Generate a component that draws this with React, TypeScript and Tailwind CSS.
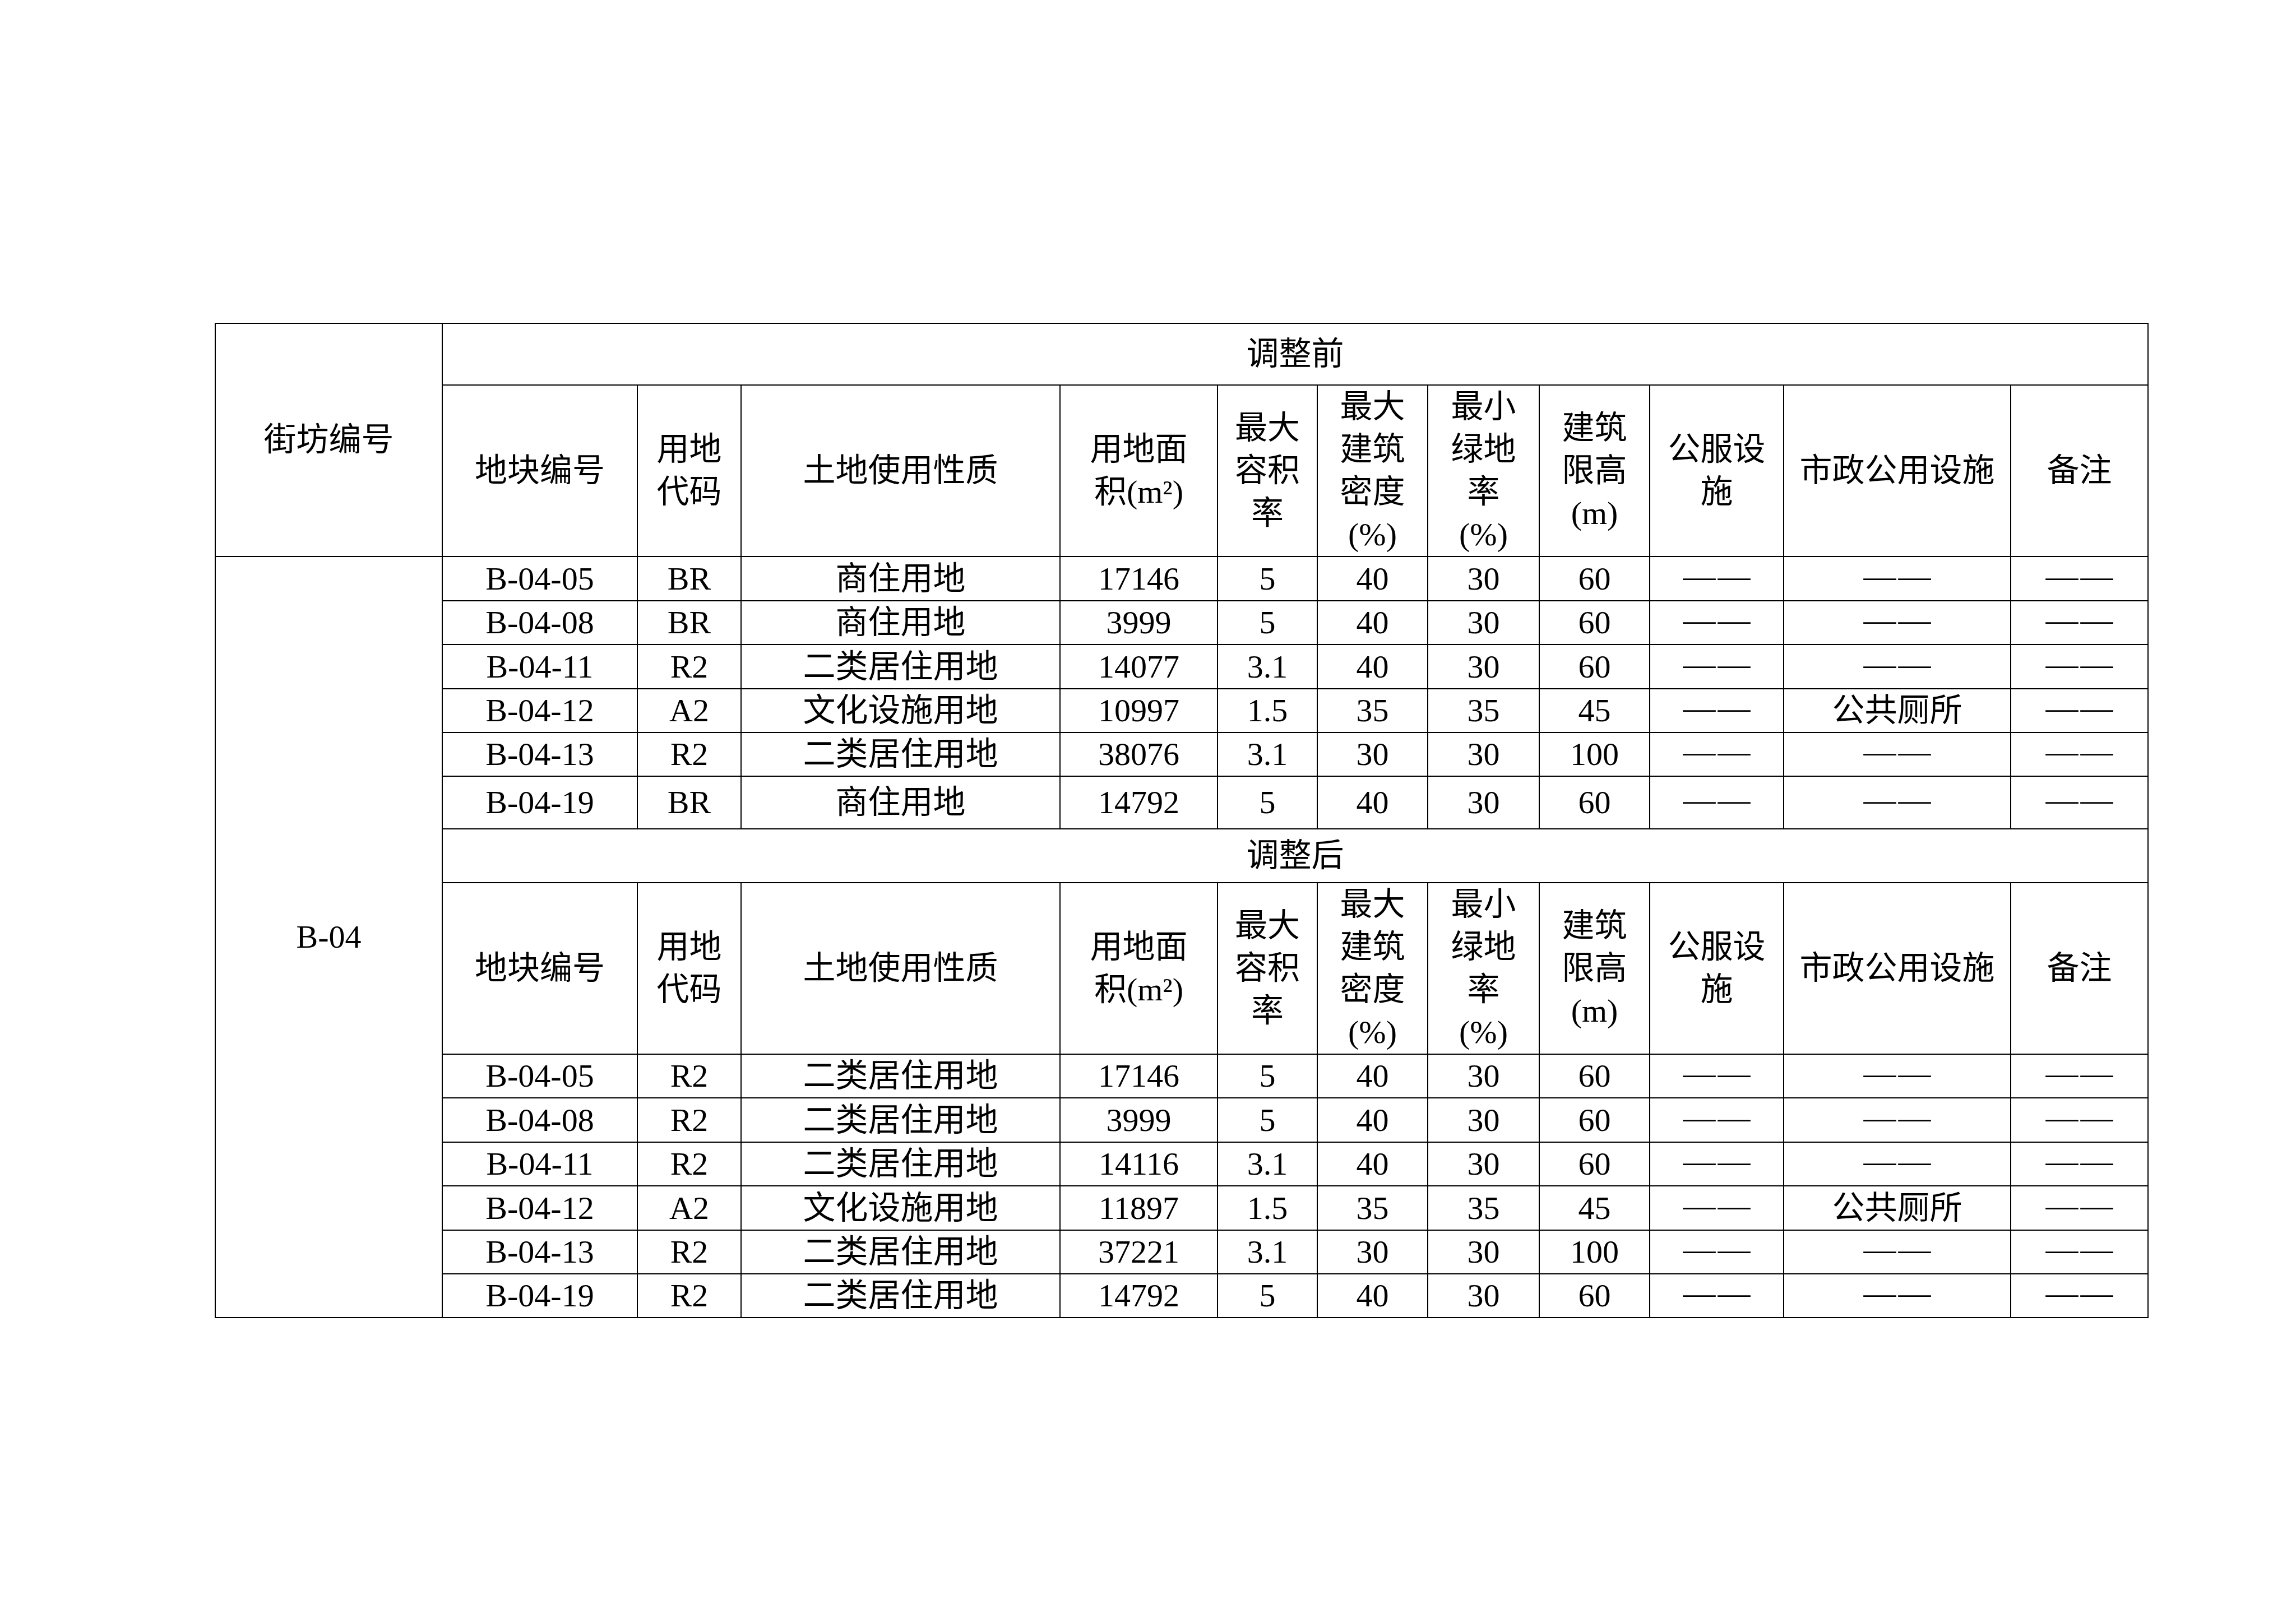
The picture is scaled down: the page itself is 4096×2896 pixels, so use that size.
import React from "react";

type Row = { cells: string[]; h: string };

const before: Row[] = [
  { h: "h-[79px]", cells: ["B-04-05", "BR", "商住用地", "17146", "5", "40", "30", "60", "——", "——", "——"] },
  { h: "h-[78px]", cells: ["B-04-08", "BR", "商住用地", "3999", "5", "40", "30", "60", "——", "——", "——"] },
  { h: "h-[79px]", cells: ["B-04-11", "R2", "二类居住用地", "14077", "3.1", "40", "30", "60", "——", "——", "——"] },
  { h: "h-[78px]", cells: ["B-04-12", "A2", "文化设施用地", "10997", "1.5", "35", "35", "45", "——", "公共厕所", "——"] },
  { h: "h-[78px]", cells: ["B-04-13", "R2", "二类居住用地", "38076", "3.1", "30", "30", "100", "——", "——", "——"] },
  { h: "h-[94px]", cells: ["B-04-19", "BR", "商住用地", "14792", "5", "40", "30", "60", "——", "——", "——"] },
];

const after: Row[] = [
  { h: "h-[78px]", cells: ["B-04-05", "R2", "二类居住用地", "17146", "5", "40", "30", "60", "——", "——", "——"] },
  { h: "h-[79px]", cells: ["B-04-08", "R2", "二类居住用地", "3999", "5", "40", "30", "60", "——", "——", "——"] },
  { h: "h-[78px]", cells: ["B-04-11", "R2", "二类居住用地", "14116", "3.1", "40", "30", "60", "——", "——", "——"] },
  { h: "h-[79px]", cells: ["B-04-12", "A2", "文化设施用地", "11897", "1.5", "35", "35", "45", "——", "公共厕所", "——"] },
  { h: "h-[78px]", cells: ["B-04-13", "R2", "二类居住用地", "37221", "3.1", "30", "30", "100", "——", "——", "——"] },
  { h: "h-[77px]", cells: ["B-04-19", "R2", "二类居住用地", "14792", "5", "40", "30", "60", "——", "——", "——"] },
];

const cell = "border-2 border-black p-0 text-center align-middle";
const dashCell = "border-2 border-black p-0 pb-[10px] pl-[4px] leading-[50px] tracking-[4px] text-center align-middle";

function HeaderRow() {
  return (
    <tr className="h-[305px]">
      <td className={cell}>地块编号</td>
      <td className={cell}>用地<br />代码</td>
      <td className={cell}>土地使用性质</td>
      <td className={cell}>用地面<br />积(m²)</td>
      <td className={cell}>最大<br />容积<br />率</td>
      <td className={cell}>最大<br />建筑<br />密度<br />(%)</td>
      <td className={cell}>最小<br />绿地<br />率<br />(%)</td>
      <td className={cell}>建筑<br />限高<br />(m)</td>
      <td className={cell}>公服设<br />施</td>
      <td className={cell}>市政公用设施</td>
      <td className={cell}>备注</td>
    </tr>
  );
}

function DataRow({ row, lead }: { row: Row; lead?: React.ReactNode }) {
  return (
    <tr className={row.h}>
      {lead}
      {row.cells.map((c, i) => (
        <td key={i} className={c === "——" ? dashCell : cell}>
          {c}
        </td>
      ))}
    </tr>
  );
}

export default function App() {
  return (
    <div className="w-[4096px] h-[2896px] bg-white pl-[383px] pt-[576px] text-black text-[58px] leading-[76px] font-['Liberation_Serif','Noto_Sans_CJK_SC',serif]">
      <table className="border-collapse table-fixed w-[3448px] border-2 border-black">
        <colgroup>
          <col className="w-[405px]" />
          <col className="w-[348px]" />
          <col className="w-[185px]" />
          <col className="w-[569px]" />
          <col className="w-[281px]" />
          <col className="w-[178px]" />
          <col className="w-[197px]" />
          <col className="w-[199px]" />
          <col className="w-[197px]" />
          <col className="w-[239px]" />
          <col className="w-[405px]" />
          <col className="w-[245px]" />
        </colgroup>
        <tbody>
          <tr className="h-[110px]">
            <td rowSpan={2} className={cell}>街坊编号</td>
            <td colSpan={11} className={cell}>调整前</td>
          </tr>
          <HeaderRow />
          {before.map((r, i) => (
            <DataRow
              key={"b" + i}
              row={r}
              lead={i === 0 ? <td rowSpan={14} className={cell}>B-04</td> : undefined}
            />
          ))}
          <tr className="h-[96px]">
            <td colSpan={11} className={cell}>调整后</td>
          </tr>
          <HeaderRow />
          {after.map((r, i) => (
            <DataRow key={"a" + i} row={r} />
          ))}
        </tbody>
      </table>
    </div>
  );
}
